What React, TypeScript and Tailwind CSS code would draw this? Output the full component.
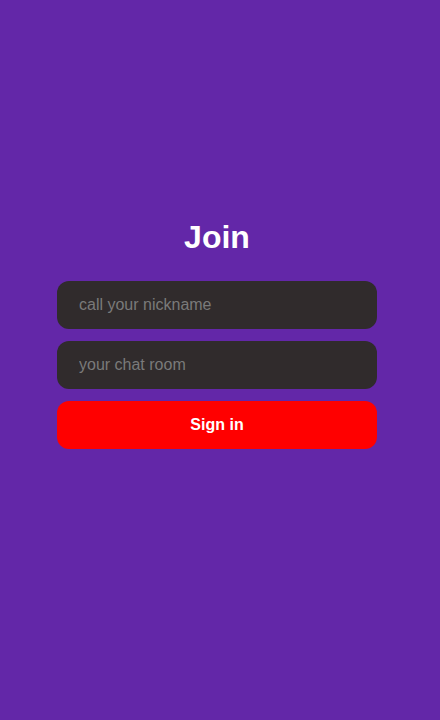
export default function App() {
  return (
    <div
      className="min-h-[720px] w-[440px] bg-[#6327a8] pt-[219px]"
      style={{ fontFamily: '"Liberation Sans", Arial, sans-serif' }}
    >
      <div className="ml-[57px] flex w-[320px] flex-col">
        <h1 className="text-center text-[32px] font-bold leading-[37px] text-white">Join</h1>
        <form className="mt-[25px] flex flex-col gap-[12px]" onSubmit={(e) => e.preventDefault()}>
          <input
            type="text"
            placeholder="call your nickname"
            className="h-[48px] w-full rounded-xl bg-[#302b2c] px-[22px] text-base text-white outline-none placeholder:text-[#7a7a7a]"
          />
          <input
            type="text"
            placeholder="your chat room"
            className="h-[48px] w-full rounded-xl bg-[#302b2c] px-[22px] text-base text-white outline-none placeholder:text-[#7a7a7a]"
          />
          <button
            type="submit"
            className="h-[48px] w-full rounded-xl bg-[#ff0000] text-base font-bold text-white"
          >
            Sign in
          </button>
        </form>
      </div>
    </div>
  );
}
